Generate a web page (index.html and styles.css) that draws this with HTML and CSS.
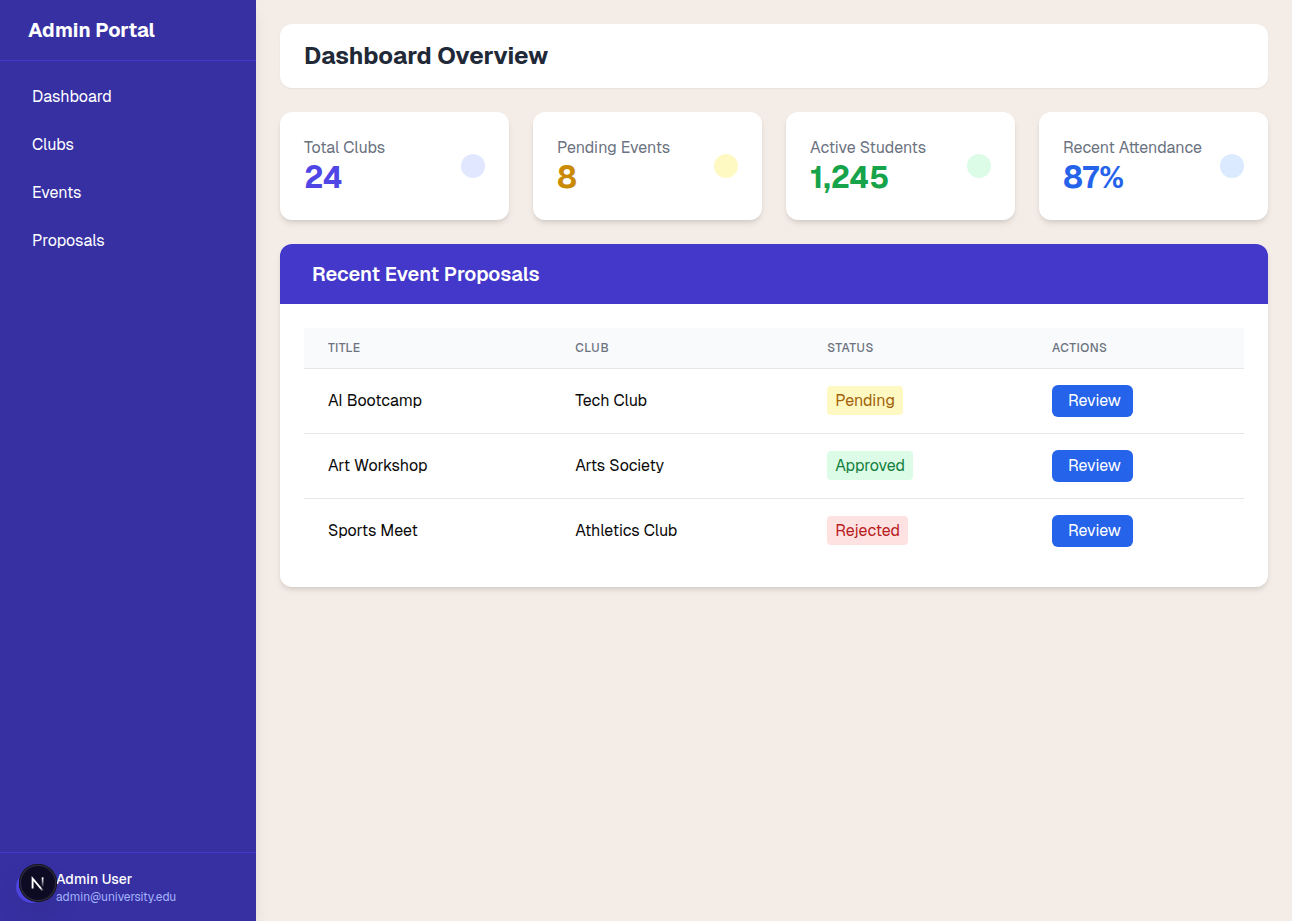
FILE: index.html
```html
<!DOCTYPE html>
<html lang="en">
<head>
<meta charset="utf-8">
<title>Admin Portal</title>
<link rel="stylesheet" href="styles.css">
</head>
<body>
<div class="app">
  <aside class="sidebar">
    <div class="brand">Admin Portal</div>
    <nav class="nav">
      <a class="nav-link">Dashboard</a>
      <a class="nav-link">Clubs</a>
      <a class="nav-link">Events</a>
      <a class="nav-link">Proposals</a>
    </nav>
    <div class="user">
      <div class="avatar"></div>
      <div class="user-info">
        <p class="user-name">Admin User</p>
        <p class="user-mail">admin@university.edu</p>
      </div>
      <div class="dev-badge">
        <svg width="38" height="38" viewBox="0 0 38 38" fill="none">
          <defs>
            <linearGradient id="diag" x1="18" y1="18" x2="25" y2="26.5" gradientUnits="userSpaceOnUse"><stop offset=".6" stop-color="#fff"/><stop offset="1" stop-color="#fff" stop-opacity="0"/></linearGradient>
            <linearGradient id="stem" x1="24" y1="14" x2="24" y2="24" gradientUnits="userSpaceOnUse"><stop stop-color="#fff"/><stop offset="1" stop-color="#fff" stop-opacity="0"/></linearGradient>
          </defs>
          <path d="M13.6 24.5V14.5L23.7 26.6" stroke="url(#diag)" stroke-width="1.9"/>
          <path d="M23.6 13.3V22.5" stroke="url(#stem)" stroke-width="1.7"/>
        </svg>
      </div>
    </div>
  </aside>
  <main class="main">
    <header class="page-header"><h1>Dashboard Overview</h1></header>
    <section class="stats">
      <div class="card stat"><div><p class="label">Total Clubs</p><p class="value indigo">24</p></div><span class="dot dot-indigo"></span></div>
      <div class="card stat"><div><p class="label">Pending Events</p><p class="value yellow">8</p></div><span class="dot dot-yellow"></span></div>
      <div class="card stat"><div><p class="label">Active Students</p><p class="value green">1,245</p></div><span class="dot dot-green"></span></div>
      <div class="card stat"><div><p class="label">Recent Attendance</p><p class="value blue">87%</p></div><span class="dot dot-blue"></span></div>
    </section>
    <section class="card proposals">
      <h2>Recent Event Proposals</h2>
      <div class="table">
        <div class="row head"><span>TITLE</span><span>CLUB</span><span>STATUS</span><span>ACTIONS</span></div>
        <div class="row"><span>AI Bootcamp</span><span>Tech Club</span><span><span class="tag pending">Pending</span></span><span><button>Review</button></span></div>
        <div class="row"><span>Art Workshop</span><span>Arts Society</span><span><span class="tag approved">Approved</span></span><span><button>Review</button></span></div>
        <div class="row"><span>Sports Meet</span><span>Athletics Club</span><span><span class="tag rejected">Rejected</span></span><span><button>Review</button></span></div>
      </div>
    </section>
  </main>
</div>
</body>
</html>
```
FILE: styles.css
```css
* { box-sizing: border-box; margin: 0; padding: 0; }
body { font: 16px/24px Geist, Inter, sans-serif; color: #0a0a0a; background: #f4ece6; }
.app { display: flex; height: 921px; }
.sidebar { width: 256px; display: flex; flex-direction: column; background: #3730a3; color: #fff; box-shadow: 0 10px 15px -3px #0000001a, 0 4px 6px -4px #0000001a; }
.brand { height: 61px; padding: 16px 28px; border-bottom: 1px solid #4338ca; font-size: 20px; line-height: 28px; font-weight: 700; }
.nav { flex: 1; padding: 16px; display: flex; flex-direction: column; gap: 8px; }
.nav-link { height: 40px; padding: 8px 16px; }
.user { position: relative; height: 69px; padding: 16px; display: flex; align-items: center; border-top: 1px solid #4338ca; }
.avatar { width: 32px; height: 32px; margin-right: 8px; border-radius: 50%; background: #4f46e5; }
.user-name { font-size: 14px; line-height: 20px; font-weight: 500; }
.user-mail { font-size: 12px; line-height: 16px; color: #a5b4fc; }
.dev-badge { position: absolute; left: 19px; top: 11px; width: 38px; height: 38px; border-radius: 50%; background: #0d0b24; box-shadow: inset 0 0 0 1px #17161f, inset 0 0 0 2px #302e42, 0 16px 32px -8px #0000003d; }
.dev-badge svg { display: block; }
.main { flex: 1; padding: 24px; display: flex; flex-direction: column; gap: 24px; }
.page-header { height: 64px; padding: 16px 24px; background: #fff; border-radius: 12px; box-shadow: 0 1px 2px #0000000d; }
h1 { font-size: 24px; line-height: 32px; color: #1f2937; }
.stats { display: grid; grid-template-columns: repeat(4, 1fr); gap: 24px; }
.card { background: #fff; border-radius: 12px; box-shadow: 0 4px 6px -1px #0000001a, 0 2px 4px -2px #0000001a; }
.stat { height: 108px; padding: 24px; display: flex; justify-content: space-between; align-items: center; }
.label { color: #6b7280; white-space: nowrap; }
.value { font-size: 30px; line-height: 36px; font-weight: 700; }
.indigo { color: #4f46e5; }
.yellow { color: #ca8a04; }
.green { color: #16a34a; }
.blue { color: #2563eb; }
.dot { width: 24px; height: 24px; border-radius: 50%; flex: none; }
.dot-indigo { background: #e0e7ff; }
.dot-yellow { background: #fef9c3; }
.dot-green { background: #dcfce7; }
.dot-blue { background: #dbeafe; }
.proposals { overflow: hidden; }
h2 { height: 60px; padding: 16px 32px; background: #4338ca; color: #fff; font-size: 20px; line-height: 28px; font-weight: 600; }
.table { padding: 24px; }
.row { display: grid; grid-template-columns: 247.2px 252px 224.7px 1fr; height: 65px; padding: 0 24px; align-items: center; border-bottom: 1px solid #e5e7eb; }
.row:last-child { height: 64px; border: 0; }
.head { height: 41px; background: #f9fafb; color: #6b7280; font-size: 12px; font-weight: 500; letter-spacing: .6px; }
.tag { padding: 4px 8px; border-radius: 4px; }
.pending { background: #fef9c3; color: #a16207; }
.approved { background: #dcfce7; color: #15803d; }
.rejected { background: #fee2e2; color: #b91c1c; }
button { font: inherit; display: block; padding: 4px 12px 4px 16px; border: 0; border-radius: 6px; background: #2563eb; color: #fff; }
```
